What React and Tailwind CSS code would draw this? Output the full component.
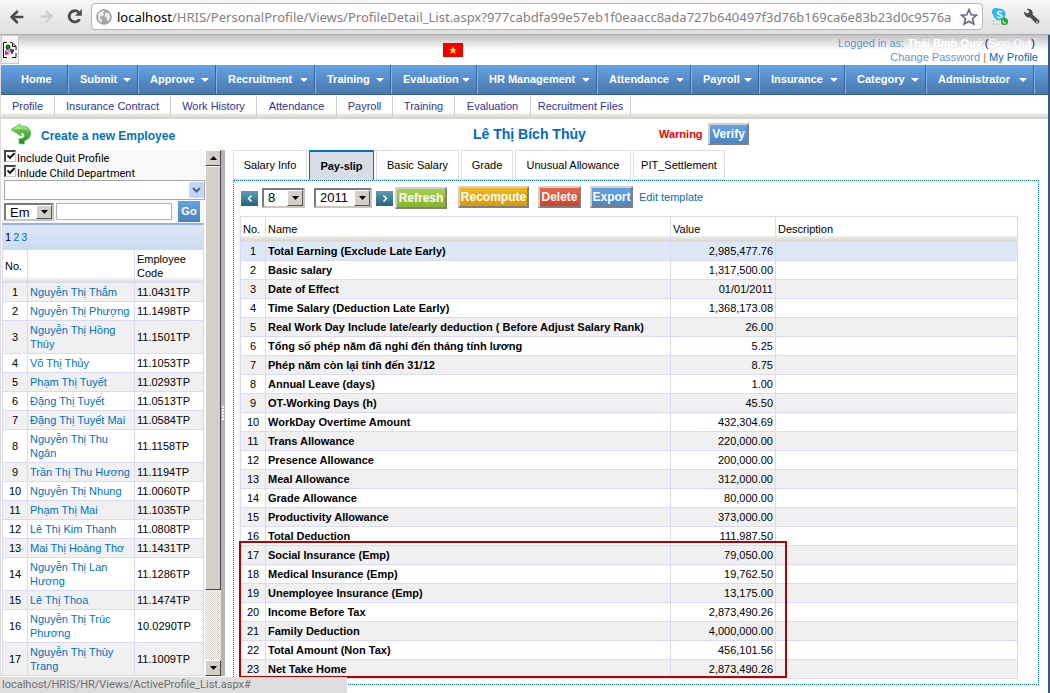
import React from "react";
import { ArrowLeft, ArrowRight } from "lucide-react";

const MENU = [
  ["Home", "w-[67px] pl-5", false],
  ["Submit", "w-[70px] pl-3", true],
  ["Approve", "w-[78px] pl-3", true],
  ["Recruitment", "w-[99px] pl-3", true],
  ["Training", "w-[76px] pl-3", true],
  ["Evaluation", "w-[86px] pl-3", true],
  ["HR Management", "w-[120px] pl-3", true],
  ["Attendance", "w-[94px] pl-3", true],
  ["Payroll", "w-[68px] pl-3", true],
  ["Insurance", "w-[86px] pl-3", true],
  ["Category", "w-[81px] pl-3", true],
  ["Administrator", "w-[108px] pl-3", true],
];

const SUBMENU = [
  ["Profile", "w-[54px]"],
  ["Insurance Contract", "w-[116px]"],
  ["Work History", "w-[86px]"],
  ["Attendance", "w-[80px]"],
  ["Payroll", "w-[56px]"],
  ["Training", "w-[62px]"],
  ["Evaluation", "w-[76px]"],
  ["Recruitment Files", "w-[100px]"],
];

const EMPLOYEES = [
  ["Nguyễn Thị Thắm", "11.0431TP"],
  ["Nguyễn Thị Phượng", "11.1498TP"],
  ["Nguyễn Thị Hồng Thúy", "11.1501TP"],
  ["Võ Thị Thủy", "11.1053TP"],
  ["Phạm Thị Tuyết", "11.0293TP"],
  ["Đặng Thị Tuyết", "11.0513TP"],
  ["Đặng Thị Tuyết Mai", "11.0584TP"],
  ["Nguyễn Thị Thu Ngân", "11.1158TP"],
  ["Trần Thị Thu Hương", "11.1194TP"],
  ["Nguyễn Thị Nhung", "11.0060TP"],
  ["Phạm Thị Mai", "11.1035TP"],
  ["Lê Thị Kim Thanh", "11.0808TP"],
  ["Mai Thị Hoàng Thơ", "11.1431TP"],
  ["Nguyễn Thị Lan Hương", "11.1286TP"],
  ["Lê Thị Thoa", "11.1474TP"],
  ["Nguyễn Thị Trúc Phương", "10.0290TP"],
  ["Nguyễn Thị Thùy Trang", "11.1009TP"],
];

const TABS = [
  ["Salary Info", "w-[74px]"],
  ["Pay-slip", "w-[65px]"],
  ["Basic Salary", "w-[83px]"],
  ["Grade", "w-[52px]"],
  ["Unusual Allowance", "w-[116px]"],
  ["PIT_Settlement", "w-[92px]"],
];

const PAYSLIP = [
  ["Total Earning (Exclude Late Early)", "2,985,477.76"],
  ["Basic salary", "1,317,500.00"],
  ["Date of Effect", "01/01/2011"],
  ["Time Salary (Deduction Late Early)", "1,368,173.08"],
  ["Real Work Day Include late/early deduction ( Before Adjust Salary Rank)", "26.00"],
  ["Tổng số phép năm đã nghỉ đến tháng tính lương", "5.25"],
  ["Phép năm còn lại tính đến 31/12", "8.75"],
  ["Annual Leave (days)", "1.00"],
  ["OT-Working Days (h)", "45.50"],
  ["WorkDay Overtime Amount", "432,304.69"],
  ["Trans Allowance", "220,000.00"],
  ["Presence Allowance", "200,000.00"],
  ["Meal Allowance", "312,000.00"],
  ["Grade Allowance", "80,000.00"],
  ["Productivity Allowance", "373,000.00"],
  ["Total Deduction", "111,987.50"],
  ["Social Insurance (Emp)", "79,050.00"],
  ["Medical Insurance (Emp)", "19,762.50"],
  ["Unemployee Insurance (Emp)", "13,175.00"],
  ["Income Before Tax", "2,873,490.26"],
  ["Family Deduction", "4,000,000.00"],
  ["Total Amount (Non Tax)", "456,101.56"],
  ["Net Take Home", "2,873,490.26"],
];

function BrowserBar() {
  return (
    <div className="flex h-[35px] items-start border-b border-[#a9adb4] bg-linear-to-b from-[#f6f6f6] to-[#dfdfdf] pr-[10px] pl-2">
      <button aria-label="Back" className="mt-2 mr-3">
        <ArrowLeft size={18} strokeWidth={3.6} color="#4b4b4b" />
      </button>
      <button aria-label="Forward" className="mt-2 mr-3">
        <ArrowRight size={17} strokeWidth={3.4} color="#cfcfcf" />
      </button>
      <button aria-label="Reload" className="mt-2 mr-2">
        <svg width="16" height="17" viewBox="0 0 16 17">
          <path d="M12.6 11.2A5.6 5.6 0 1 1 11.6 4.2" fill="none" stroke="#4b4b4b" strokeWidth="2.8" />
          <path d="M14.8 1v6.8H8z" fill="#4b4b4b" />
        </svg>
      </button>
      <div className="mt-[3px] flex h-[27px] min-w-0 flex-1 items-center rounded-[4px] border border-[#b6b6b6] bg-white px-1">
        <svg width="16" height="16" viewBox="0 0 16 16" className="mr-[5px] shrink-0">
          <circle cx="8" cy="8" r="7.2" fill="#a8a8a8" stroke="#8d8d8d" />
          <path d="M2 5c2-3 5-3.4 6.5-3L7 4l1.4 1.6L6 7.4 4.4 7 4 9.200l2 1.600-.6 3C3 12.600 1.400 9.500 2 5zM9.600 3l3.600 1.600 1.200 3.600-2 4-1.800-.8L11 9 8.600 7.600z" fill="#ececec" />
        </svg>
        <div className="flex-1 overflow-hidden font-['Noto_Sans',sans-serif] text-[13px] leading-5 whitespace-nowrap text-[#808080]">
          <span className="text-black">localhost</span>
          /HRIS/PersonalProfile/Views/ProfileDetail_List.aspx?977cabdfa99e57eb1f0eaacc8ada727b640497f3d76b169ca6e83b23d0c9576a
        </div>
        <svg width="18" height="18" viewBox="0 0 18 18" className="ml-px shrink-0">
          <path d="M9 1.600l2.200 5.100 5.400.4-4.100 3.600 1.300 5.500L9 13.300l-4.800 2.900 1.300-5.500L1.400 7.100l5.400-.4z" fill="#fff" stroke="#66697c" strokeWidth="1.600" />
        </svg>
      </div>
      <svg width="18" height="18" viewBox="0 0 18 18" className="mt-2 ml-2 shrink-0">
        <circle cx="5" cy="4" r="4" fill="#2fb4ee" />
        <circle cx="8.500" cy="6.500" r="6" fill="#2fb4ee" />
        <path d="M11 4.300C10 3 6.400 3 6.300 5c0 2 4.800 1.300 4.700 3.200-.1 1.900-4 2-5 .4" fill="none" stroke="#fff" strokeWidth="1.500" />
        <path d="M2 12h10v5H2z" fill="#c7c9cb" />
        <path d="M2 14.500h10M4.500 12v5M7 12v5M9.500 12v5" stroke="#fff" strokeWidth=".7" />
        <circle cx="13.500" cy="13.500" r="3.500" fill="#21a421" />
        <path d="M12.300 12v2.800h2.700" fill="none" stroke="#fff" />
      </svg>
      <button aria-label="Settings" className="mt-2 ml-[14px]">
        <svg width="17" height="17" viewBox="0 0 17 17">
          <path d="M1 3.600l3 1.800 1.800-.4.300-1.900L3.500 1C6 .300 8.500 1.300 9.400 3.400c.5 1.100.5 2 .2 3l6.300 5.900c1.600 1.900-1.200 4.600-3.100 3L7.200 9.400C4.200 10.300 1 8 1 3.600z" fill="#4d4d4d" />
          <circle cx="14" cy="14.100" r=".9" fill="#ddd" />
        </svg>
      </button>
    </div>
  );
}

function Header() {
  return (
    <header className="flex h-[30px] items-start bg-linear-to-b from-[#c2c2c2] to-white to-50%">
      <div className="flex h-[29px] w-[18px] items-center border border-[#c8c8c8] bg-[#f3f3f3]">
        <svg width="16" height="18" viewBox="0 0 16 18">
          <path d="M1 1.500h9l4 4v11H1z" fill="#fff" />
          <path d="M1.500 17V1.500H5M8 1.500h2l4 4V9M10.500 2v3.500H14M2 16.500h3M10 16.500h4V12" fill="none" stroke="#111" />
          <circle cx="6" cy="6" r="2.200" fill="#0a8a0a" stroke="#111" strokeWidth=".6" />
          <path d="M3 9l5 4-5 1z" fill="#e815c0" />
          <path d="M8 8l4 1-2 4z" fill="#1747d0" stroke="#111" strokeWidth=".6" />
          <path d="M4 8l4 3" stroke="#c00" />
        </svg>
      </div>
      <svg width="20" height="14" viewBox="0 0 20 14" className="mt-2 ml-[424px]" role="img" aria-label="Vietnam flag">
        <path d="M0 0h20v14H0z" fill="#f00000" />
        <path d="M10 3l1.100 2.900 3 .1-2.400 1.900.9 3L10 9.200l-2.600 1.700.9-3L5.900 6l3-.1z" fill="#ffd93b" />
      </svg>
      <div className="mr-[10px] ml-auto text-right text-[11px] leading-[14px]">
        <div className="mt-px mr-[3px] text-[#5f95d2]">
          Logged in as: <b className="text-white">Thái Bình Quý</b>{" "}
          <span className="text-[#223]">
            (<a href="#" className="text-white">Sign Out</a>)
          </span>
        </div>
        <div>
          <a href="#" className="text-[#5f95d2]">Change Password</a>
          <span className="text-[#d87400]"> | </span>
          <a href="#" className="text-[#0066b3]">My Profile</a>
        </div>
      </div>
    </header>
  );
}

function MainMenu() {
  return (
    <nav className="flex h-[30px] overflow-hidden border-b border-[#34608f] bg-linear-to-b from-[#64a3e4] to-[#4877ac] text-[11px] font-bold text-white">
      {MENU.map(([label, cls, arrow]) => (
        <a
          key={label}
          href="#"
          className={`flex shrink-0 items-center justify-between border-r border-[#3a6797] pr-[6px] whitespace-nowrap shadow-[1px_0_0_#7db4ea] ${cls}`}
        >
          {label}
          {arrow && (
            <svg width="8" height="4" viewBox="0 0 8 4" className="shrink-0">
              <path d="M0 0h8L4 4z" fill="#fff" />
            </svg>
          )}
        </a>
      ))}
    </nav>
  );
}

function SubMenu() {
  return (
    <nav className="flex h-6 bg-linear-to-b from-white from-75% via-[#efefea] via-78% to-[#d2d2ca] pt-px text-[11px] text-[#333399]">
      {SUBMENU.map(([label, cls]) => (
        <a
          key={label}
          href="#"
          className={`flex h-5 shrink-0 items-center justify-center border-r border-[#cfcfcf] pt-px whitespace-nowrap ${cls}`}
        >
          {label}
        </a>
      ))}
    </nav>
  );
}

function ClassicSelect({ label, options, className }) {
  return (
    <span className={`relative inline-block border-2 border-t-[#7a7a7a] border-r-[#c9c5bd] border-b-[#c9c5bd] border-l-[#7a7a7a] bg-white ${className}`}>
      <select aria-label={label} className="block h-full w-full appearance-none bg-transparent pl-1 text-[13px] leading-4 text-black outline-none">
        {options.map((o) => (
          <option key={o}>{o}</option>
        ))}
      </select>
      <span className="pointer-events-none absolute inset-y-0 right-0 flex w-4 items-center justify-center border border-t-white border-r-[#555] border-b-[#555] border-l-white bg-[#d4d0c8]">
        <svg width="7" height="4" viewBox="0 0 7 4">
          <path d="M0 0h7L3.500 4z" fill="#000" />
        </svg>
      </span>
    </span>
  );
}

function PushButton({ children, className }) {
  return (
    <button className={`h-[22px] border-2 border-t-[#d4d0c8] border-r-[#808080] border-b-[#808080] border-l-[#d4d0c8] text-[12px] leading-[18px] font-bold text-white ${className}`}>
      {children}
    </button>
  );
}

function CheckRow({ id, label }) {
  return (
    <div className="flex h-[15px] items-start pl-[3px]">
      <span className="relative mr-px flex h-3 w-3 items-center justify-center">
        <input
          id={id}
          type="checkbox"
          defaultChecked
          className="h-3 w-3 appearance-none border-t-2 border-r border-b border-l-2 border-t-[#444] border-r-[#c8c8c8] border-b-[#c8c8c8] border-l-[#444] bg-white"
        />
        <svg width="8" height="8" viewBox="0 0 8 8" className="pointer-events-none absolute top-[2px] left-[3px]">
          <path d="M.5 3.500L3 6 7.500 1.200" fill="none" stroke="#000" strokeWidth="1.900" />
        </svg>
      </span>
      <label htmlFor={id} className="pt-[2px] font-[Roboto,sans-serif] text-[11px] leading-[14px]">{label}</label>
    </div>
  );
}

function ScrollButton({ label, d }) {
  return (
    <button aria-label={label} className="flex h-4 w-4 shrink-0 items-center justify-center border border-t-white border-r-[#444] border-b-[#444] border-l-white bg-[#d4d0c8]">
      <svg width="7" height="4" viewBox="0 0 7 4">
        <path d={d} fill="#000" />
      </svg>
    </button>
  );
}

function Sidebar() {
  return (
    <aside className="flex w-[224px] shrink-0">
      <div className="w-[204px] bg-[#f8f8f8]">
        <CheckRow id="quit" label="Include Quit Profile" />
        <CheckRow id="child" label="Inlude Child Department" />
        <div className="ml-[3px] flex h-5 items-center border border-[#a8a8a8] bg-white">
          <input aria-label="Department" className="h-full min-w-0 flex-1 outline-none" />
          <button aria-label="Open departments" className="flex h-4 w-[15px] items-center justify-center rounded-[2px] bg-[#c3d5fb]">
            <svg width="9" height="6" viewBox="0 0 9 6">
              <path d="M1 1l3.500 3.500L8 1" fill="none" stroke="#4d6185" strokeWidth="2" />
            </svg>
          </button>
        </div>
        <div className="flex items-center pt-px pl-[3px]">
          <ClassicSelect label="Search field" options={["Em"]} className="h-[18px] w-[50px]" />
          <input aria-label="Search text" className="ml-[2px] h-[17px] w-[116px] border border-[#b4b4b4] bg-white" />
          <button className="ml-[6px] h-[21px] w-[22px] bg-linear-to-b from-[#64a3e4] to-[#4a80bd] text-[11px] font-bold text-white">Go</button>
        </div>
        <div className="mt-px mr-px ml-px border-x border-t-2 border-x-[#dadaf8] border-t-[#96aee0] bg-linear-to-b from-[#dbe6f4] to-[#cbdcf0] pt-[5px] pl-[2px] text-[11px] leading-[14px]">
          <div className="flex h-[20px] gap-[2px]">
            <span>1</span>
            <a href="#" className="text-[#0072bc]">2</a>
            <a href="#" className="text-[#0072bc]">3</a>
          </div>
        </div>
        <table className="ml-px w-[202px] table-fixed border-separate border-spacing-0 border-l border-[#dadaf8] bg-white text-[11px] leading-[14px]">
          <colgroup>
            <col className="w-[25px]" />
            <col />
            <col className="w-[69px]" />
          </colgroup>
          <thead>
            <tr className="h-[33px] bg-linear-to-b from-white from-80% to-[#d8d8d2] text-left">
              <th className="border-r border-b border-[#dadaf8] pl-[2px] font-normal">No.</th>
              <th aria-label="Employee" className="border-r border-b border-[#dadaf8] font-normal" />
              <th className="border-r border-b border-[#dadaf8] pl-[2px] font-normal">Employee Code</th>
            </tr>
          </thead>
          <tbody>
            {EMPLOYEES.map(([name, code], i) => (
              <tr key={code} className="odd:bg-[#f0f0f0]">
                <td className="border-r border-b border-[#dadaf8] py-[2px] text-center">{i + 1}</td>
                <td className="border-r border-b border-[#dadaf8] py-[2px] pl-[2px]">
                  <a href="#" className="text-[#0072bc]">{name}</a>
                </td>
                <td className="border-r border-b border-[#dadaf8] py-[2px] pl-[2px]">{code}</td>
              </tr>
            ))}
          </tbody>
        </table>
      </div>
      <div className="flex w-4 shrink-0 flex-col bg-[#eceae5] bg-[repeating-conic-gradient(#d4d0c8_0_25%,#fff_0_50%)] bg-[length:2px_2px]">
        <ScrollButton label="Scroll up" d="M0 4h7L3.500 0z" />
        <div className="flex-1 border border-t-white border-r-[#444] border-b-[#444] border-l-white bg-[#d4d0c8]" />
        <div className="h-[70px]" />
        <ScrollButton label="Scroll down" d="M0 0h7L3.500 4z" />
      </div>
      <div className="flex w-1 flex-col items-center justify-center gap-px bg-[#b4b4b4]">
        {[0, 1, 2, 3, 4].map((n) => (
          <span key={n} className="h-[2px] w-[2px] bg-[#f4f4f4]" />
        ))}
      </div>
    </aside>
  );
}

function StepButton({ label, d }) {
  return (
    <button aria-label={label} className="flex h-[15px] w-[17px] items-center justify-center bg-linear-to-b from-[#5d9db8] to-[#27637f]">
      <svg width="6" height="7" viewBox="0 0 6 7">
        <path d={d} fill="none" stroke="#fff" strokeWidth="1.500" />
      </svg>
    </button>
  );
}

function Payslip() {
  return (
    <section className="relative mr-[9px] border border-dotted border-[#0072bc] pt-[5px] pr-5 pb-[5px] pl-[6px]">
      <div className="flex h-[30px] items-start pl-px">
        <div className="mt-px flex items-center">
          <StepButton label="Previous month" d="M4.500 .5l-3 3 3 3" />
          <ClassicSelect label="Month" options={["8"]} className="ml-1 h-5 w-[43px]" />
          <ClassicSelect label="Year" options={["2011"]} className="mr-1 ml-[9px] h-5 w-[58px]" />
          <StepButton label="Next month" d="M1.500 .5l3 3-3 3" />
          <PushButton className="ml-[2px] w-[52px] bg-linear-to-b from-[#a5d04a] to-[#86b52c]">Refresh</PushButton>
        </div>
        <PushButton className="ml-[11px] w-[71px] bg-linear-to-b from-[#ecb81c] to-[#d89c05]">Recompute</PushButton>
        <PushButton className="ml-[9px] w-[43px] bg-linear-to-b from-[#e9654a] to-[#c94428]">Delete</PushButton>
        <PushButton className="ml-[9px] w-[43px] bg-linear-to-b from-[#64a3e4] to-[#4c85c4]">Export</PushButton>
        <a href="#" className="ml-[6px] text-[11px] leading-[22px] text-[#0072bc]">Edit template</a>
      </div>
      <table className="w-full table-fixed border-separate border-spacing-0 border-t border-l border-[#dadaf8] text-[11px] leading-[14px]">
        <colgroup>
          <col className="w-[25px]" />
          <col />
          <col className="w-[105px]" />
          <col className="w-[242px]" />
        </colgroup>
        <thead>
          <tr className="h-[25px] bg-linear-to-b from-white from-75% via-[#efefea] via-78% to-[#d2d2ca] text-left">
            {["No.", "Name", "Value", "Description"].map((h) => (
              <th key={h} className="border-r border-b border-[#dadaf8] pl-[2px] font-normal">{h}</th>
            ))}
          </tr>
        </thead>
        <tbody>
          {PAYSLIP.map(([name, value], i) => (
            <tr key={name} className={i === 0 ? "bg-[#dde7f6]" : i % 2 === 0 ? "bg-[#f0f0f0]" : "bg-white"}>
              <td className="border-r border-b border-[#dadaf8] py-[2px] text-center">{i + 1}</td>
              <td className="border-r border-b border-[#dadaf8] py-[2px] pl-[2px] font-bold whitespace-nowrap">{name}</td>
              <td className="border-r border-b border-[#dadaf8] py-[2px] pr-[2px] text-right">{value}</td>
              <td className="border-r border-b border-[#dadaf8] py-[2px]" />
            </tr>
          ))}
        </tbody>
      </table>
      <div className="pointer-events-none absolute right-[251px] bottom-[6px] left-[5px] h-[137px] border-2 border-[#b80000]" />
    </section>
  );
}

export default function App() {
  return (
    <div className="flex min-h-screen flex-col bg-white font-['Liberation_Sans',Arial,sans-serif] text-black">
      <BrowserBar />
      <div className="flex-1 border-r-2 border-l border-r-[#3a5488] border-l-[#dcdcdc]">
        <Header />
        <MainMenu />
        <SubMenu />
        <div className="flex h-[31px] items-start pt-1">
          <svg width="22" height="22" viewBox="0 0 22 22" className="ml-[9px]">
            <defs>
              <linearGradient id="leaf" x1="0" y1="0" x2="0" y2="1">
                <stop offset="0" stopColor="#7ddc5c" />
                <stop offset="1" stopColor="#1f8a1f" />
              </linearGradient>
            </defs>
            <path d="M1 6.500L10 .800l.6 2.700c5.500-1.200 10.200 1.600 10 7.200-.2 4.500-3.500 6-6 6.800l-.4 3.500-5-.2-.3-5c3.700.2 6-1.600 5.500-4-.4-1.800-2.200-2.200-3.600-1.800l.8 3.300z" fill="url(#leaf)" stroke="#4db64a" strokeWidth=".6" />
            <path d="M2 6.500L9.500 2l.4 2.300c4-.9 8 .3 9.400 3.500-3-2.300-6-2.600-9-1.500z" fill="#b6f09a" opacity=".75" />
          </svg>
          <a href="#" className="mt-[6px] ml-[9px] w-[432px] text-[12px] leading-[14px] font-bold text-[#0072bc]">Create a new Employee</a>
          <h1 className="mt-px w-[186px] text-[14px] leading-5 font-bold text-[#0066cc]">Lê Thị Bích Thủy</h1>
          <span className="mt-1 w-[49px] text-[11px] leading-[14px] font-bold text-[#f00000]">Warning</span>
          <PushButton className="w-[41px] bg-linear-to-b from-[#64a3e4] to-[#4c85c4]">Verify</PushButton>
        </div>
        <div className="flex items-start">
          <Sidebar />
          <main className="ml-2 min-w-0 flex-1">
            <div className="flex h-[30px] gap-[2px] text-[11px]">
              {TABS.map(([label, cls], i) => (
                <button
                  key={label}
                  className={
                    i === 1
                      ? `h-[30px] border-x border-t-2 border-[#0072bc] bg-[#d9dde6] font-bold ${cls}`
                      : `h-[30px] border border-[#dcdcdc] bg-white ${cls}`
                  }
                >
                  {label}
                </button>
              ))}
            </div>
            <Payslip />
          </main>
        </div>
      </div>
      <div className="fixed bottom-0 left-0 h-4 w-[347px] bg-[#dedede] pl-[2px] font-[Roboto,sans-serif] text-[11px] leading-4 text-[#6e6e6e]">
        localhost/HRIS/HR/Views/ActiveProfile_List.aspx#
      </div>
    </div>
  );
}
